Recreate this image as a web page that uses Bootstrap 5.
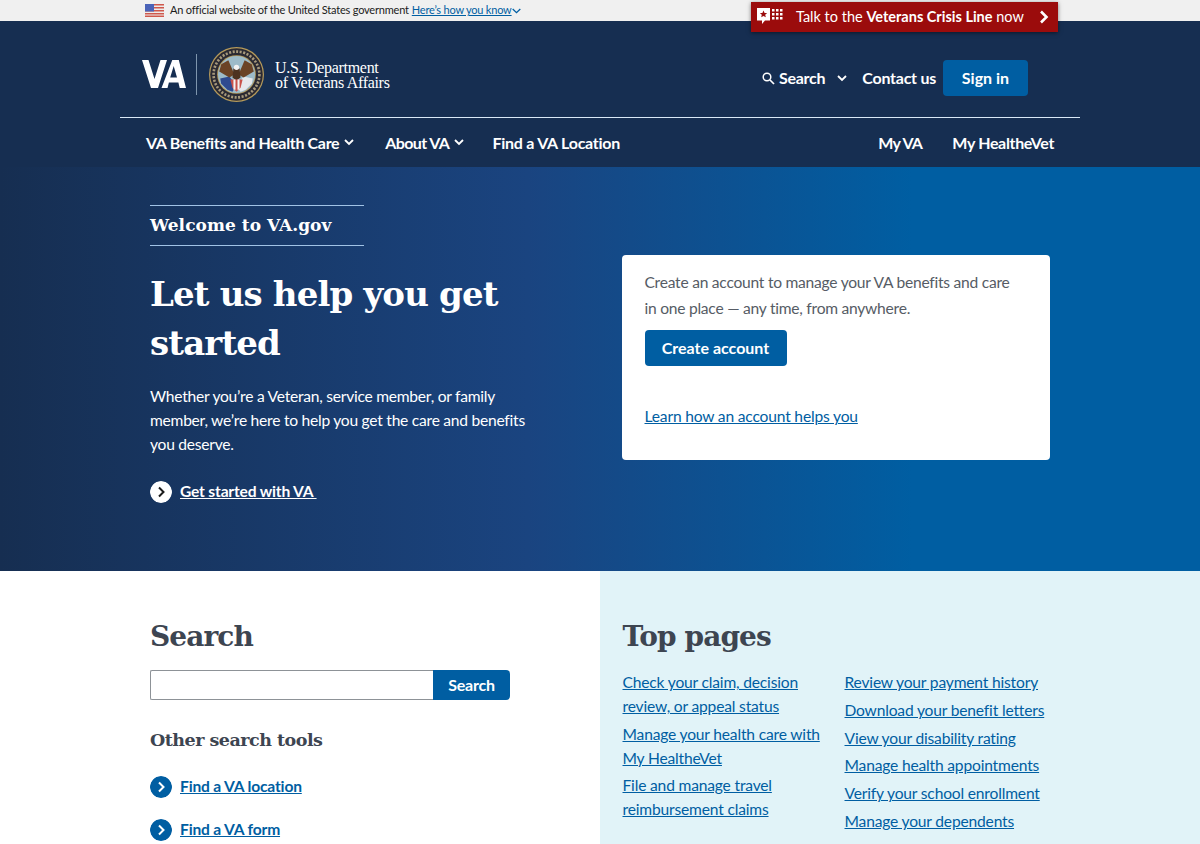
<!DOCTYPE html>
<html lang="en">
<head>
  <meta charset="UTF-8" />
  <meta name="viewport" content="width=device-width, initial-scale=1.0"/>
  <title>VA.gov Home | Veterans Affairs</title>
  <link href="https://cdn.jsdelivr.net/npm/bootstrap@5.3.0/dist/css/bootstrap.min.css" rel="stylesheet">
  <style>
    html, body { height: 844px; overflow: hidden; }
    body {
      font-family: "Lato", "Liberation Sans", sans-serif;
      font-size: 15.6px;
      letter-spacing: -.18px;
      color: #323a45;
      background: #fff;
    }
    .serif-head { font-family: "DejaVu Serif", "Liberation Serif", serif; font-weight: 700; }
    a { color: #005ea2; }

    .gov-strip { height: 21px; background: #f0f0f0; font-size: 11px; letter-spacing: -.2px; color: #1b1b1b; padding-left: 145px; }
    .gov-strip svg:first-child { margin-right: 6px; }
    .gov-strip a { color: #005ea2; margin-left: 3px; }
    .crisis-tab {
      position: absolute; top: 2px; left: 751px; width: 307px; height: 30px;
      background: #9b0c0c; color: #fff; font-size: 14.5px; letter-spacing: 0; padding: 0 9px 0 6px;
      box-shadow: 0 1px 4px rgba(0,0,0,.5);
    }
    .crisis-tab .crisis-text { margin-left: 12px; }

    .site-head { background: #162e51; height: 146px; color: #fff; }
    .head-top { height: 96px; padding: 10px 172px 0 142px; }
    .head-links { font-size: 16px; font-weight: 700; letter-spacing: -.25px; padding-top: 8px; }
    .head-links .search-caret { margin-left: 12px; }
    .head-links .contact-link { margin-left: 15px; }
    .head-links .btn-signin { margin-left: 7px; }
    .logo-sep { width: 1px; height: 41px; background: #7e95ad; margin: 0 12px 0 10px; }
    .logo-name { font-family: "Liberation Serif", serif; font-size: 16px; letter-spacing: -.3px; line-height: 15px; margin-left: 11px; padding-top: 1px; }
    .btn-signin { background: #005ea2; color: #fff; font-weight: 700; font-size: 16px; width: 85px; height: 36px; border-radius: 4px; padding: 0; border: 0; letter-spacing: 0; }
    .head-rule { height: 1px; background: #d9e8f6; margin: 0 120px; }
    .head-nav { height: 49px; padding: 0 146px; font-size: 16px; font-weight: 700; letter-spacing: -.34px; }
    .head-nav a { color: #fff; text-decoration: none; }
    .head-nav svg { margin-left: 5px; }
    .head-nav .nav-about { margin-left: 31px; letter-spacing: -.6px; }
    .head-nav .nav-find { margin-left: 28px; letter-spacing: -.25px; }
    .head-nav .nav-myva { letter-spacing: -.7px; }
    .head-nav .nav-vet { margin-left: 30px; }

    .hero { height: 404px; background: linear-gradient(90deg, #162e51 0%, #1a4480 44%, #005ea2 76%); color: #fff; padding: 38px 150px 0; }
    .hero-left { width: 385px; }
    .welcome { width: 214px; height: 41px; border-top: 1px solid #a1c3e6; border-bottom: 1px solid #a1c3e6; font-size: 17px; letter-spacing: .05px; line-height: 39px; margin: 0; }
    .hero h1 { font-size: 34px; line-height: 49px; margin: 24px 0 0; letter-spacing: -.85px; white-space: nowrap; }
    .hero-copy { line-height: 24px; margin: 16px 0 0; letter-spacing: -.25px; }
    .arrow-link { font-weight: 700; }
    .arrow-dot { width: 22px; height: 22px; border-radius: 50%; flex: none; }
    .hero .arrow-link { margin-top: 24px; }
    .hero .arrow-link a { color: #fff; }
    .account-box { width: 428px; height: 205px; margin: 50px 0 0 87px; background: #fff; border-radius: 4px; color: #565c65; padding: 14px 40px 14px 22.5px; line-height: 26px; letter-spacing: -.25px; }
    .btn-create { background: #005ea2; color: #fff; font-weight: 700; font-size: 16px; letter-spacing: 0; width: 142px; height: 36px; border-radius: 4px; padding: 0; border: 0; display: block; margin: 9px 0 37px; }
    .account-box a { color: #005ea2; letter-spacing: -.18px; }

    .home-lower { height: 273px; }
    .search-side { width: 600px; padding: 45px 0 0 150px; }
    .pages-side { width: 600px; background: #e1f3f8; padding: 45px 0 0 22.5px; }
    .lower-title { font-size: 28px; line-height: 42px; color: #3d4551; margin: 0; letter-spacing: -.9px; }
    .search-row { width: 360px; height: 30px; margin-top: 12px; }
    .search-field { flex: 1; border: 1px solid #8d9297; border-right: 0; border-radius: 2px 0 0 2px; background: #fff; min-width: 0; }
    .search-go { width: 77px; background: #005ea2; color: #fff; border: 0; font-weight: 700; font-size: 16px; letter-spacing: -.25px; border-radius: 0 4px 4px 0; padding: 0; }
    .tools-title { font-size: 17.5px; color: #3d4551; margin: 27px 0 23px; line-height: 26px; letter-spacing: -.5px; }
    .tool-link { margin-bottom: 21px; height: 22px; }
    .pages-cols { margin-top: 12px; }
    .pages-col-a { width: 222px; line-height: 24px; }
    .pages-col-a div { margin-bottom: 3.5px; }
    .pages-col-b { line-height: 24px; }
    .pages-col-b div { margin-bottom: 3.8px; white-space: nowrap; }
  </style>
</head>
<body>

<div class="gov-strip d-flex align-items-center">
  <svg width="19" height="13" viewBox="0 0 19 13">
    <rect width="19" height="13" fill="#ececec"/>
    <g fill="#d0584c"><rect width="19" height="1.5"/><rect y="3" width="19" height="1.5"/><rect y="6" width="19" height="1.5"/><rect y="9" width="19" height="1.5"/><rect y="11.5" width="19" height="1.5"/></g>
    <rect width="9" height="7.5" fill="#4a63b8"/>
  </svg>
  <span>An official website of the United States government</span>
  <a href="#">Here’s how you know</a>
  <svg width="9" height="6" viewBox="0 0 9 6"><path d="M.7 1l3.800 3.600L8.300 1" fill="none" stroke="#005ea2" stroke-width="1.300"/></svg>
</div>

<div class="crisis-tab d-flex align-items-center">
  <svg width="27" height="18" viewBox="0 0 27 18">
    <path d="M0 0h13v12.500H8L5 16v-3.500H0z" fill="#fff"/>
    <path d="M6.500 2.500l1.100 2.400 2.500.2-1.900 1.700.6 2.500-2.300-1.300-2.300 1.300.6-2.500L2.900 5.100l2.500-.2z" fill="#9b0c0c"/>
    <g fill="#fff"><rect x="15" y="1" width="2.500" height="2.500"/><rect x="19" y="1" width="2.500" height="2.500"/><rect x="23" y="1" width="2.500" height="2.500"/><rect x="15" y="5" width="2.500" height="2.500"/><rect x="19" y="5" width="2.500" height="2.500"/><rect x="23" y="5" width="2.500" height="2.500"/><rect x="15" y="9" width="2.500" height="2.500"/><rect x="19" y="9" width="2.500" height="2.500"/><rect x="23" y="9" width="2.500" height="2.500"/></g>
  </svg>
  <span class="crisis-text">Talk to the <b>Veterans Crisis Line</b> now</span>
  <svg class="ms-auto" width="10" height="14" viewBox="0 0 10 14"><path d="M2 1.500L7.500 7 2 12.500" fill="none" stroke="#fff" stroke-width="2.600"/></svg>
</div>

<header class="site-head">
  <div class="head-top d-flex align-items-center">
    <span class="va-mark d-flex align-items-center">
      <svg width="44" height="28" viewBox="0 0 44 28"><path d="M0 0h6.500l6 19 6-19H25l-9 28H9zM30.300 0h6.500L44 28h-6.300l-1.300-5.500h-9.500L25.500 28h-6zM28.200 17.500h6.800L31.700 6z" fill="#fff" fill-rule="evenodd"/></svg>
    </span>
    <span class="logo-sep"></span>
    <svg width="55" height="55" viewBox="0 0 54 54">
      <circle cx="27" cy="27" r="27" fill="#b59a5b"/>
      <circle cx="27" cy="27" r="25.800" fill="#2b2a33"/>
      <circle cx="27" cy="27" r="22.500" fill="none" stroke="#a89a7c" stroke-width="2.600" stroke-dasharray="2 1.500"/>
      <circle cx="27" cy="27" r="19" fill="#b59a5b"/>
      <circle cx="27" cy="27" r="18.200" fill="#9dbbc9"/>
      <path d="M20 29L11 31l1 5 6 6 5 2 4-6z" fill="#2f4a8f"/>
      <path d="M34 29l9 2-1 5-6 6-5 2-4-6z" fill="#e6e8ec"/>
      <path d="M25 27L19 13l-7 4-2 7 5 3 5 3z" fill="#6b4326"/>
      <path d="M29 27l6-14 7 4 2 7-5 3-5 3z" fill="#6b4326"/>
      <path d="M24 21h6l1 9-4 3-4-3z" fill="#4d3220"/>
      <circle cx="27" cy="20" r="2.600" fill="#f2f2f2"/>
      <path d="M21 32h12l-2 8-4 4-4-4z" fill="#c9524a"/>
      <path d="M24 32h2v10h-2zM28 32h2v10h-2z" fill="#f2f2f2"/>
    </svg>
    <div class="logo-name">U.S. Department<br>of Veterans Affairs</div>
    <div class="head-links ms-auto d-flex align-items-center">
      <svg width="13" height="13" viewBox="0 0 13 13" class="me-1"><circle cx="5" cy="5" r="3.800" fill="none" stroke="#fff" stroke-width="1.500"/><path d="M8 8l4 4" stroke="#fff" stroke-width="1.700"/></svg>
      <span>Search</span>
      <svg class="search-caret" width="10" height="7" viewBox="0 0 10 7"><path d="M1 1l4 4 4-4" fill="none" stroke="#fff" stroke-width="1.800"/></svg>
      <span class="contact-link">Contact us</span>
      <button class="btn-signin" type="button">Sign in</button>
    </div>
  </div>
  <div class="head-rule"></div>
  <nav class="head-nav d-flex align-items-center">
    <a href="#">VA Benefits and Health Care</a>
    <svg width="10" height="7" viewBox="0 0 10 7"><path d="M1 1l4 4 4-4" fill="none" stroke="#fff" stroke-width="1.800"/></svg>
    <a href="#" class="nav-about">About VA</a>
    <svg width="10" height="7" viewBox="0 0 10 7"><path d="M1 1l4 4 4-4" fill="none" stroke="#fff" stroke-width="1.800"/></svg>
    <a href="#" class="nav-find">Find a VA Location</a>
    <a href="#" class="nav-myva ms-auto">My VA</a>
    <a href="#" class="nav-vet">My HealtheVet</a>
  </nav>
</header>

<section class="hero d-flex">
  <div class="hero-left flex-shrink-0">
    <p class="welcome serif-head">Welcome to VA.gov</p>
    <h1 class="serif-head">Let us help you get<br>started</h1>
    <p class="hero-copy">Whether you’re a Veteran, service member, or family member, we’re here to help you get the care and benefits you deserve.</p>
    <div class="arrow-link d-flex align-items-center gap-2">
      <svg class="arrow-dot" viewBox="0 0 22 22"><circle cx="11" cy="11" r="11" fill="#fff"/><path d="M9 6.500l4.500 4.500L9 15.500" fill="none" stroke="#1b1b1b" stroke-width="2"/></svg>
      <a href="#">Get started with VA&nbsp;</a>
    </div>
  </div>
  <div class="account-box flex-shrink-0">
    Create an account to manage your VA benefits and care in one place — any time, from anywhere.
    <button class="btn-create" type="button">Create account</button>
    <a href="#">Learn how an account helps you</a>
  </div>
</section>

<section class="home-lower d-flex">
  <div class="search-side">
    <h2 class="lower-title serif-head">Search</h2>
    <div class="search-row d-flex">
      <input class="search-field" type="text" aria-label="Search">
      <button class="search-go" type="button">Search</button>
    </div>
    <h3 class="tools-title serif-head">Other search tools</h3>
    <div class="tool-link arrow-link d-flex align-items-center gap-2">
      <svg class="arrow-dot" viewBox="0 0 22 22"><circle cx="11" cy="11" r="11" fill="#005ea2"/><path d="M9 6.500l4.500 4.500L9 15.500" fill="none" stroke="#fff" stroke-width="2"/></svg>
      <a href="#">Find a VA location</a>
    </div>
    <div class="tool-link arrow-link d-flex align-items-center gap-2">
      <svg class="arrow-dot" viewBox="0 0 22 22"><circle cx="11" cy="11" r="11" fill="#005ea2"/><path d="M9 6.500l4.500 4.500L9 15.500" fill="none" stroke="#fff" stroke-width="2"/></svg>
      <a href="#">Find a VA form</a>
    </div>
  </div>
  <div class="pages-side">
    <h2 class="lower-title serif-head">Top pages</h2>
    <div class="pages-cols d-flex">
      <div class="pages-col-a">
        <div><a href="#">Check your claim, decision review, or appeal status</a></div>
        <div><a href="#">Manage your health care with My HealtheVet</a></div>
        <div><a href="#">File and manage travel reimbursement claims</a></div>
      </div>
      <div class="pages-col-b">
        <div><a href="#">Review your payment history</a></div>
        <div><a href="#">Download your benefit letters</a></div>
        <div><a href="#">View your disability rating</a></div>
        <div><a href="#">Manage health appointments</a></div>
        <div><a href="#">Verify your school enrollment</a></div>
        <div><a href="#">Manage your dependents</a></div>
      </div>
    </div>
  </div>
</section>

<script src="https://cdn.jsdelivr.net/npm/bootstrap@5.3.0/dist/js/bootstrap.bundle.min.js"></script>
</body>
</html>
